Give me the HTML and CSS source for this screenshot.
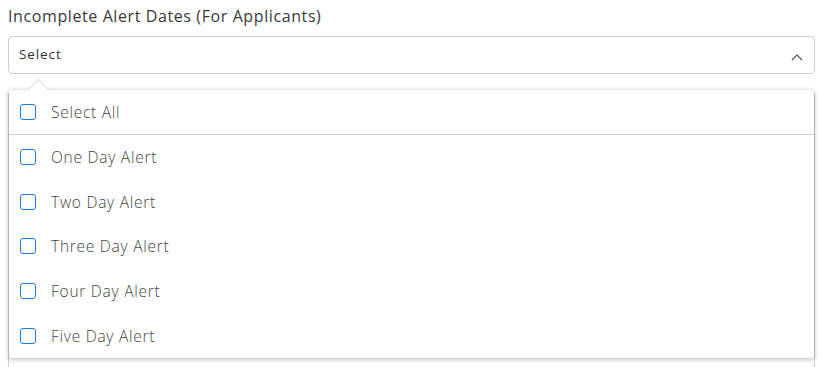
FILE: index.html
```html
<!DOCTYPE html>
<html>
<head>
<meta charset="utf-8">
<link rel="stylesheet" href="styles.css">
</head>
<body>
<div class="field">
  <label class="field-label">Incomplete Alert Dates (For Applicants)</label>
  <div class="select-wrap">
    <div class="select-box">
      <span class="select-text">Select</span>
      <svg class="chevron" width="12" height="8" viewBox="0 0 12 8"><path d="M1 7 L6 2 L11 7" fill="none" stroke="#555" stroke-width="1.2"/></svg>
    </div>
    <div class="behind"></div>
    <div class="dropdown">
      <div class="arrow"></div>
      <div class="option option-all"><span class="cb"></span><span class="opt-text">Select All</span></div>
      <div class="option"><span class="cb"></span><span class="opt-text">One Day Alert</span></div>
      <div class="option"><span class="cb"></span><span class="opt-text">Two Day Alert</span></div>
      <div class="option"><span class="cb"></span><span class="opt-text">Three Day Alert</span></div>
      <div class="option"><span class="cb"></span><span class="opt-text">Four Day Alert</span></div>
      <div class="option"><span class="cb"></span><span class="opt-text">Five Day Alert</span></div>
    </div>
  </div>
</div>
</body>
</html>
```

FILE: styles.css
```css
html, body { margin: 0; padding: 0; background: #fff; }
body { font-family: "Open Sans", "Liberation Sans", sans-serif; color: #333; overflow: hidden; }
.field { padding: 6px 7px 0 8px; }
.field-label { display: block; font-size: 16px; line-height: 20px; color: #3a3a3a; letter-spacing: 0.6px; margin-bottom: 10px; }
.select-wrap { position: relative; }
.select-box { height: 36px; border: 1px solid #cfcfcf; border-radius: 4px; display: flex; align-items: center; justify-content: space-between; padding: 0 11px 0 10px; box-sizing: content-box; }
.select-text { font-size: 13.5px; color: #333; letter-spacing: 0.9px; margin-top: -2px; }
.chevron { margin-top: 4px; }
.behind { height: 273px; margin-top: 20px; border: 1px solid #cfcfcf; border-top: none; border-bottom: none; }
.dropdown { position: absolute; top: 54px; left: 1px; right: 1px; background: #fff; border-radius: 3px; box-shadow: 0 1px 4px 1px rgba(0,0,0,0.22); }
.arrow { position: absolute; top: -8px; left: 22px; width: 14px; height: 14px; background: #fff; transform: rotate(45deg); border-top: 1px solid #ddd; border-left: 1px solid #ddd; }
.option { position: relative; display: flex; align-items: center; height: 44.6px; padding-left: 11px; }
.option-all { height: 44px; border-bottom: 1px solid #d0d0d0; }
.cb { width: 14px; height: 14px; border: 1.5px solid #1f7cf0; border-radius: 3px; margin-right: 15px; flex: none; }
.opt-text { font-size: 15.5px; font-weight: 300; color: #444; letter-spacing: 0.75px; }
```
